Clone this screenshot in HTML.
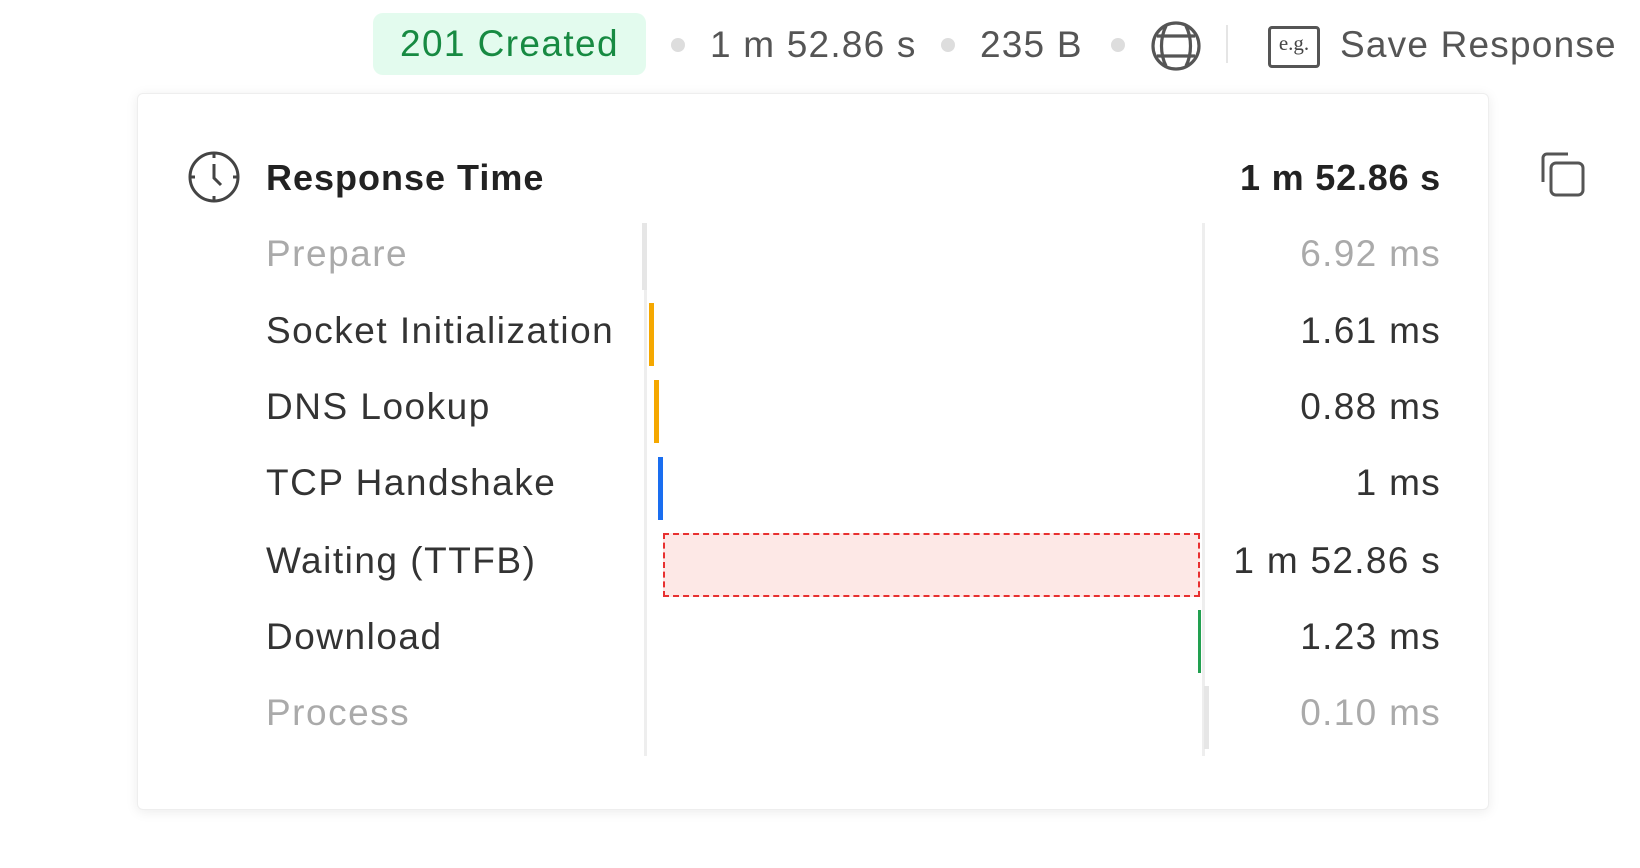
<!DOCTYPE html>
<html><head><meta charset="utf-8"><style>
body{margin:0;width:1640px;height:868px;background:#fff;position:relative;overflow:hidden;font-family:"Liberation Sans",sans-serif;color:#333}
.a{position:absolute;white-space:nowrap}
.badge{left:373px;top:13px;width:273px;height:62px;background:#e3fbee;border-radius:10px;color:#178a42;font-size:37px;letter-spacing:1.4px;line-height:62px;text-align:center}
.dot{width:14px;height:14px;border-radius:50%;background:#ddd}
.meta{font-size:37px;letter-spacing:1.2px;color:#555;line-height:44px}
.panel{left:137px;top:93px;width:1350px;height:715px;border:1px solid #eee;border-radius:6px;box-shadow:0 2px 12px rgba(0,0,0,.08);background:#fff}
.lbl{left:266px;font-size:37px;letter-spacing:1.5px;line-height:44px}
.val{right:199px;font-size:37px;letter-spacing:1.3px;line-height:44px;text-align:right}
.g{color:#aaa}
.bar{position:absolute;width:5px;height:63px}
</style></head><body>
<div class="a badge">201 Created</div>
<div class="a dot" style="left:671px;top:38px"></div>
<div class="a meta" style="left:710px;top:23px">1 m 52.86 s</div>
<div class="a dot" style="left:941px;top:38px"></div>
<div class="a meta" style="left:980px;top:23px">235 B</div>
<div class="a dot" style="left:1111px;top:38px"></div>
<svg class="a" style="left:1149px;top:19px" width="54" height="54" viewBox="0 0 54 54" fill="none" stroke="#555" stroke-width="3.2"><circle cx="27" cy="27" r="23"/><path d="M17 7c-6 12-6 28 0 40M37 7c6 12 6 28 0 40"/><path d="M8 17h38M8 37h38"/></svg>
<div class="a" style="left:1226px;top:25px;width:2px;height:38px;background:#e5e5e5"></div>
<div class="a" style="left:1268px;top:26px;width:46px;height:36px;border:3px solid #555;border-radius:4px;font-family:'Liberation Serif',serif;font-size:21px;line-height:28px;text-align:center;color:#444">e.g.</div>
<div class="a meta" style="left:1340px;top:23px;color:#555">Save Response</div>

<div class="a panel"></div>
<svg class="a" style="left:187px;top:150px" width="54" height="54" viewBox="0 0 54 54" fill="none" stroke="#444" stroke-width="3"><circle cx="27" cy="27" r="24"/><path d="M27 14v14l7 7"/><path d="M27 3v5M27 46v5M3 27h5M46 27h5"/></svg>
<div class="a" style="left:266px;top:156px;font-size:36px;letter-spacing:1px;font-weight:bold;line-height:44px;color:#222">Response Time</div>
<div class="a" style="right:199px;top:156px;font-size:36px;letter-spacing:0.8px;font-weight:bold;line-height:44px;color:#222">1 m 52.86 s</div>
<svg class="a" style="left:1538px;top:150px" width="52" height="50" viewBox="0 0 52 50" fill="none" stroke="#555" stroke-width="3"><path d="M5 32V8a4 4 0 0 1 4-4h21"/><rect x="13" y="13" width="32" height="32" rx="5"/></svg>

<div class="a lbl g" style="top:232px">Prepare</div>
<div class="a lbl" style="top:309px">Socket Initialization</div>
<div class="a lbl" style="top:385px">DNS Lookup</div>
<div class="a lbl" style="top:461px">TCP Handshake</div>
<div class="a lbl" style="top:539px">Waiting (TTFB)</div>
<div class="a lbl" style="top:615px">Download</div>
<div class="a lbl g" style="top:691px">Process</div>

<div class="a val g" style="top:232px">6.92 ms</div>
<div class="a val" style="top:309px">1.61 ms</div>
<div class="a val" style="top:385px">0.88 ms</div>
<div class="a val" style="top:461px">1 ms</div>
<div class="a val" style="top:539px">1 m 52.86 s</div>
<div class="a val" style="top:615px">1.23 ms</div>
<div class="a val g" style="top:691px">0.10 ms</div>

<div class="a" style="left:644px;top:223px;width:3px;height:533px;background:#eee"></div>
<div class="a" style="left:1202px;top:223px;width:3px;height:533px;background:#eee"></div>
<div class="bar" style="left:642px;top:223px;height:67px;background:#e6e6e6"></div>
<div class="bar" style="left:649px;top:303px;background:#f5a800"></div>
<div class="bar" style="left:654px;top:380px;background:#f5a800"></div>
<div class="bar" style="left:658px;top:457px;background:#1a6ef0"></div>
<div class="a" style="left:663px;top:533px;width:533px;height:60px;border:2px dashed #e83030;background:#fde8e6"></div>
<div class="a" style="left:1198px;top:610px;width:3px;height:63px;background:#22a050"></div>
<div class="bar" style="left:1204px;top:686px;height:63px;background:#e6e6e6"></div>
</body></html>
